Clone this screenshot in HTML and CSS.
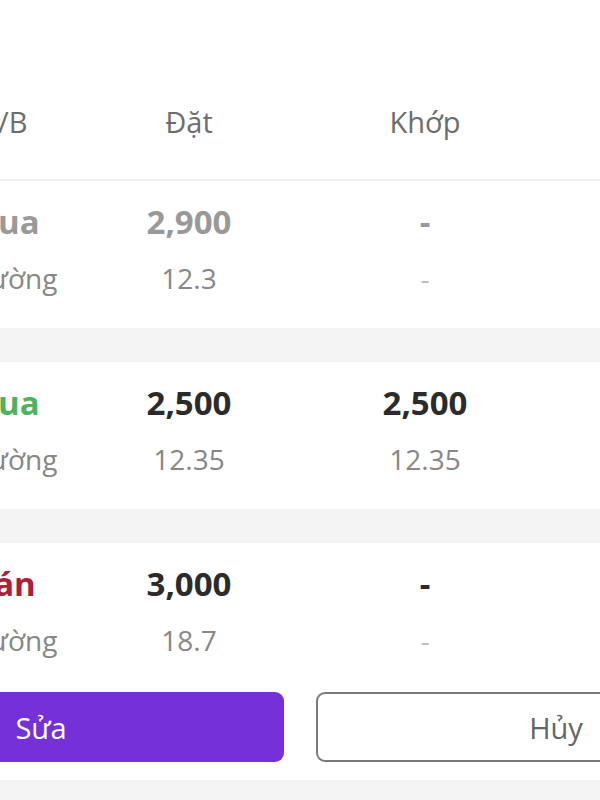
FILE: index.html
```html
<!DOCTYPE html>
<html lang="vi">
<head>
<meta charset="utf-8">
<link rel="stylesheet" href="styles.css">
</head>
<body>
<div class="viewport">
  <div class="sheet">
    <div class="grid header">
      <div class="c1">M/B</div>
      <div class="c2">Đặt</div>
      <div class="c3">Khớp</div>
    </div>
    <div class="card">
      <div class="grid row">
        <div class="c1 main muted side-buy">Mua</div>
        <div class="c2 main muted">2,900</div>
        <div class="c3 main muted">-</div>
        <div class="c1 sub kind">Thị trường</div>
        <div class="c2 sub">12.3</div>
        <div class="c3 sub faint">-</div>
      </div>
    </div>
    <div class="band"></div>
    <div class="card">
      <div class="grid row">
        <div class="c1 main buy side-buy">Mua</div>
        <div class="c2 main">2,500</div>
        <div class="c3 main">2,500</div>
        <div class="c1 sub kind">Thị trường</div>
        <div class="c2 sub">12.35</div>
        <div class="c3 sub">12.35</div>
      </div>
    </div>
    <div class="band"></div>
    <div class="card last">
      <div class="grid row">
        <div class="c1 main sell">Bán</div>
        <div class="c2 main">3,000</div>
        <div class="c3 main">-</div>
        <div class="c1 sub kind">Thị trường</div>
        <div class="c2 sub">18.7</div>
        <div class="c3 sub faint">-</div>
      </div>
      <div class="actions">
        <button class="btn primary">Sửa</button>
        <button class="btn outline">Hủy</button>
      </div>
    </div>
    <div class="band tail"></div>
  </div>
</div>
</body>
</html>
```
FILE: styles.css
```css
html, body {
  margin: 0;
  padding: 0;
  background: #ffffff;
  overflow: hidden;
}
.viewport {
  width: 600px;
  height: 800px;
  overflow: hidden;
}
.sheet {
  margin-left: -28px;
  width: 1100px;
  font-family: "Open Sans", "Noto Sans", sans-serif;
}
.grid {
  display: grid;
  grid-template-columns: 150px 134px 338px;
  align-items: center;
}
.c2, .c3 { text-align: center; }
.c1 { text-align: left; white-space: nowrap; }
.header {
  height: 181px;
  box-sizing: border-box;
  padding-top: 99px;
  border-bottom: 2px solid #f0f0f0;
  font-size: 29px;
  line-height: 46px;
  color: #6d6d6d;
  align-content: start;
}
.card { background: #fff; }
.row {
  padding: 18px 0 27px;
  row-gap: 10px;
  grid-auto-rows: 46px;
}
.main {
  font-size: 33px;
  font-weight: 700;
  line-height: 46px;
  color: #2b2b2b;
}
.main.side-buy { margin-left: -5px; }
.main.muted { color: #999999; }
.buy { color: #4cb35f !important; }
.sell { color: #ad1f36 !important; }
.sub {
  font-size: 28px;
  line-height: 46px;
  color: #878787;
}
.sub.kind { margin-left: -51px; }
.sub.faint { color: #bdbdbd; }
.band {
  height: 34px;
  background: #f4f4f4;
}
.card.last .row { padding-bottom: 0; height: 149px; box-sizing: border-box; align-content: start; }
.actions {
  display: flex;
  gap: 32px;
  margin-left: -174px;
  padding: 0 0 18px;
}
.btn {
  width: 486px;
  height: 70px;
  border-radius: 9px;
  font-family: "Open Sans", "Noto Sans", sans-serif;
  font-size: 29px;
  box-sizing: border-box;
}
.btn.primary {
  background: #7530d8;
  color: #ffffff;
  border: none;
  font-weight: 500;
}
.btn.outline {
  background: #fff;
  color: #656565;
  border: 2px solid #7a7a7a;
  width: 480px;
}
.band.tail { height: 40px; }
```
